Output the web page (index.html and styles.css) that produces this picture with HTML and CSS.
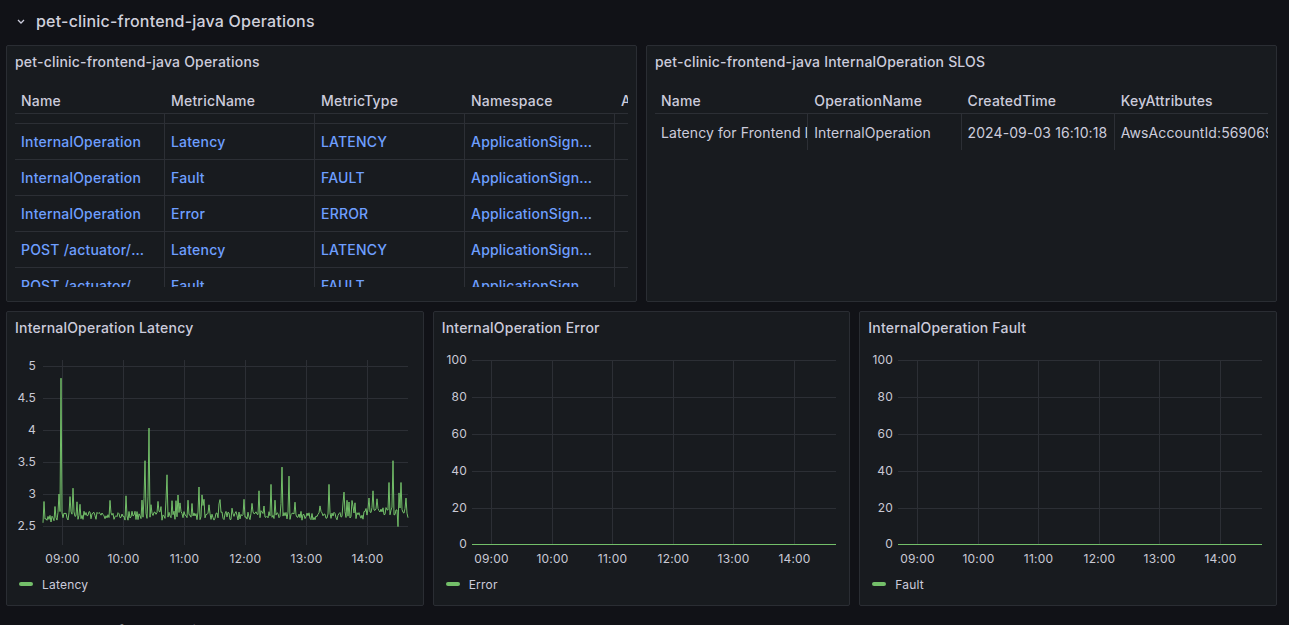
FILE: index.html
```html
<!DOCTYPE html>
<html lang="en">
<head>
  <meta charset="UTF-8" />
  <title>pet-clinic-frontend-java Operations</title>
  <link rel="stylesheet" href="styles.css">
</head>
<body>
  <div class="dashboard">
    <div class="row-title">
      <svg class="chevron" viewBox="0 0 8 5"><path d="M1 1l3 3 3-3"/></svg>
      <span>pet-clinic-frontend-java Operations</span>
    </div>

    <div class="panel-row top">
      <div class="panel">
        <div class="panel-header">pet-clinic-frontend-java Operations</div>
        <div class="table-wrap ops">
          <table>
            <thead>
              <tr>
                <th>Name</th>
                <th>MetricName</th>
                <th>MetricType</th>
                <th>Namespace</th>
                <th>AccountId</th>
              </tr>
            </thead>
            <tbody>
              <tr class="spacer"><td></td><td></td><td></td><td></td><td></td></tr>
              <tr>
                <td class="link">InternalOperation</td>
                <td class="link">Latency</td>
                <td class="link">LATENCY</td>
                <td class="link">ApplicationSignals/Service</td>
                <td></td>
              </tr>
              <tr>
                <td class="link">InternalOperation</td>
                <td class="link">Fault</td>
                <td class="link">FAULT</td>
                <td class="link">ApplicationSignals/Service</td>
                <td></td>
              </tr>
              <tr>
                <td class="link">InternalOperation</td>
                <td class="link">Error</td>
                <td class="link">ERROR</td>
                <td class="link">ApplicationSignals/Service</td>
                <td></td>
              </tr>
              <tr>
                <td class="link">POST /actuator/refresh</td>
                <td class="link">Latency</td>
                <td class="link">LATENCY</td>
                <td class="link">ApplicationSignals/Service</td>
                <td></td>
              </tr>
              <tr>
                <td class="link">POST /actuator/refresh</td>
                <td class="link">Fault</td>
                <td class="link">FAULT</td>
                <td class="link">ApplicationSignals/Service</td>
                <td></td>
              </tr>
            </tbody>
          </table>
        </div>
      </div>

      <div class="panel">
        <div class="panel-header">pet-clinic-frontend-java InternalOperation SLOS</div>
        <div class="table-wrap slos">
          <table>
            <thead>
              <tr>
                <th>Name</th>
                <th>OperationName</th>
                <th>CreatedTime</th>
                <th>KeyAttributes</th>
              </tr>
            </thead>
            <tbody>
              <tr>
                <td>Latency for Frontend InternalOperation</td>
                <td>InternalOperation</td>
                <td>2024-09-03 16:10:18</td>
                <td>AwsAccountId:569069134123,Environment:eks</td>
              </tr>
            </tbody>
          </table>
        </div>
      </div>
    </div>

    <div class="panel-row charts">
      <div class="panel">
        <div class="panel-header">InternalOperation Latency</div>
        <svg class="chart" width="416" height="225" viewBox="0 0 416 225">
          <g class="grid">
            <line x1="36" y1="22.5" x2="401" y2="22.5"/>
            <line x1="36" y1="54.5" x2="401" y2="54.5"/>
            <line x1="36" y1="86.5" x2="401" y2="86.5"/>
            <line x1="36" y1="118.5" x2="401" y2="118.5"/>
            <line x1="36" y1="150.5" x2="401" y2="150.5"/>
            <line x1="36" y1="182.5" x2="401" y2="182.5"/>
            <line x1="55.5" y1="16" x2="55.5" y2="201"/>
            <line x1="116.5" y1="16" x2="116.5" y2="201"/>
            <line x1="177.5" y1="16" x2="177.5" y2="201"/>
            <line x1="238.5" y1="16" x2="238.5" y2="201"/>
            <line x1="299.5" y1="16" x2="299.5" y2="201"/>
            <line x1="360.5" y1="16" x2="360.5" y2="201"/>
          </g>
          <g class="axis y">
            <text x="29" y="23">5</text>
            <text x="29" y="55">4.5</text>
            <text x="29" y="87">4</text>
            <text x="29" y="119">3.5</text>
            <text x="29" y="151">3</text>
            <text x="29" y="183">2.5</text>
          </g>
          <g class="axis x">
            <text x="55.5" y="216">09:00</text>
            <text x="116.5" y="216">10:00</text>
            <text x="177.5" y="216">11:00</text>
            <text x="238.5" y="216">12:00</text>
            <text x="299.5" y="216">13:00</text>
            <text x="360.5" y="216">14:00</text>
          </g>
          <polyline id="latencyLine" class="series" points=""/>
        </svg>
        <div class="legend"><span class="legend-mark"></span>Latency</div>
      </div>

      <div class="panel">
        <div class="panel-header">InternalOperation Error</div>
        <svg class="chart" width="416" height="225" viewBox="0 0 416 225">
          <g class="grid">
            <line x1="38" y1="16.5" x2="402" y2="16.5"/>
            <line x1="38" y1="53.5" x2="402" y2="53.5"/>
            <line x1="38" y1="90.5" x2="402" y2="90.5"/>
            <line x1="38" y1="127.5" x2="402" y2="127.5"/>
            <line x1="38" y1="164.5" x2="402" y2="164.5"/>
            <line x1="57.5" y1="16" x2="57.5" y2="201"/>
            <line x1="118.5" y1="16" x2="118.5" y2="201"/>
            <line x1="178.5" y1="16" x2="178.5" y2="201"/>
            <line x1="239.5" y1="16" x2="239.5" y2="201"/>
            <line x1="299.5" y1="16" x2="299.5" y2="201"/>
            <line x1="360.5" y1="16" x2="360.5" y2="201"/>
          </g>
          <g class="axis y">
            <text x="33" y="17">100</text>
            <text x="33" y="54">80</text>
            <text x="33" y="91">60</text>
            <text x="33" y="128">40</text>
            <text x="33" y="165">20</text>
            <text x="33" y="201">0</text>
          </g>
          <g class="axis x">
            <text x="57.5" y="216">09:00</text>
            <text x="118.5" y="216">10:00</text>
            <text x="178.5" y="216">11:00</text>
            <text x="239.5" y="216">12:00</text>
            <text x="299.5" y="216">13:00</text>
            <text x="360.5" y="216">14:00</text>
          </g>
          <line class="series" x1="38" y1="200.5" x2="402" y2="200.5"/>
        </svg>
        <div class="legend"><span class="legend-mark"></span>Error</div>
      </div>

      <div class="panel">
        <div class="panel-header">InternalOperation Fault</div>
        <svg class="chart" width="416" height="225" viewBox="0 0 416 225">
          <g class="grid">
            <line x1="38" y1="16.5" x2="402" y2="16.5"/>
            <line x1="38" y1="53.5" x2="402" y2="53.5"/>
            <line x1="38" y1="90.5" x2="402" y2="90.5"/>
            <line x1="38" y1="127.5" x2="402" y2="127.5"/>
            <line x1="38" y1="164.5" x2="402" y2="164.5"/>
            <line x1="57.5" y1="16" x2="57.5" y2="201"/>
            <line x1="118.5" y1="16" x2="118.5" y2="201"/>
            <line x1="178.5" y1="16" x2="178.5" y2="201"/>
            <line x1="239.5" y1="16" x2="239.5" y2="201"/>
            <line x1="299.5" y1="16" x2="299.5" y2="201"/>
            <line x1="360.5" y1="16" x2="360.5" y2="201"/>
          </g>
          <g class="axis y">
            <text x="33" y="17">100</text>
            <text x="33" y="54">80</text>
            <text x="33" y="91">60</text>
            <text x="33" y="128">40</text>
            <text x="33" y="165">20</text>
            <text x="33" y="201">0</text>
          </g>
          <g class="axis x">
            <text x="57.5" y="216">09:00</text>
            <text x="118.5" y="216">10:00</text>
            <text x="178.5" y="216">11:00</text>
            <text x="239.5" y="216">12:00</text>
            <text x="299.5" y="216">13:00</text>
            <text x="360.5" y="216">14:00</text>
          </g>
          <line class="series" x1="38" y1="200.5" x2="402" y2="200.5"/>
        </svg>
        <div class="legend"><span class="legend-mark"></span>Fault</div>
      </div>
    </div>

    <div class="row-title next">
      <svg class="chevron" viewBox="0 0 8 5"><path d="M1 1l3 3 3-3"/></svg>
      <span>pet-clinic-frontend-java Dependencies metrics</span>
    </div>
  </div>

  <script>
    // latency series, one point per minute (about 1px)
    let seed = 11;
    function rand() {
      seed = (seed * 16807) % 2147483647;
      return (seed - 1) / 2147483646;
    }

    const spikes = {
      52: 3.0, 54: 4.81, 66: 3.09, 138: 3.52, 142: 4.03, 160: 3.3, 192: 3.11,
      252: 3.05, 264: 3.15, 275: 3.42, 282: 3.28, 322: 3.15, 337: 3.03,
      366: 3.05, 382: 3.18, 386: 3.52, 391: 2.49, 394: 3.18
    };

    const points = [];
    for (let x = 36; x <= 401; x++) {
      let base = 2.66;
      if (x < 50) base = 2.62;
      if (x >= 358 && x <= 398) base = 2.74;
      let v = base + (rand() - 0.5) * 0.14;
      if (rand() < 0.14) v += 0.1 + rand() * 0.22;
      if (spikes[x] !== undefined) v = spikes[x];
      if (x === 401) v = 2.63;
      const y = 182 - (v - 2.5) * 64;
      points.push(x + "," + y.toFixed(1));
    }
    document.getElementById("latencyLine").setAttribute("points", points.join(" "));
  </script>
</body>
</html>
```

FILE: styles.css
```css
body {
  margin: 0;
  background: #111217;
  color: #ccccdc;
  font-family: Inter, "Noto Sans", sans-serif;
  font-size: 14px;
  letter-spacing: 0.2px;
  overflow: hidden;
}

.dashboard {
  padding: 0 12px 0 6px;
}

.row-title {
  display: flex;
  align-items: center;
  height: 45px;
  padding-bottom: 3px;
  box-sizing: border-box;
  font-size: 16px;
  font-weight: 500;
  color: #d0d0dc;
}

.row-title.next {
  margin-top: 4px;
}

.chevron {
  width: 8px;
  height: 5px;
  margin: 0 11px 0 11px;
  fill: none;
  stroke: #ccccdc;
  stroke-width: 1.3;
}

.panel-row {
  display: flex;
  gap: 9px;
}

.panel-row + .panel-row {
  margin-top: 9px;
}

.panel {
  flex: 1;
  min-width: 0;
  background: #181b1f;
  border: 1px solid #2a2d33;
  border-radius: 2px;
  box-sizing: border-box;
  overflow: hidden;
}

.top .panel {
  height: 257px;
}

.charts .panel {
  height: 295px;
}

.panel-header {
  height: 32px;
  line-height: 32px;
  padding: 0 8px;
  font-weight: 500;
  white-space: nowrap;
}

/* tables */

.table-wrap {
  margin: 6px 8px 0;
  height: 203px;
  overflow: hidden;
}

table {
  border-collapse: separate;
  border-spacing: 0;
  table-layout: fixed;
}

.ops table {
  width: 750px;
}

.slos table {
  width: 100%;
}

th {
  height: 30px;
  box-sizing: border-box;
  padding: 3px 6px 0;
  text-align: left;
  font-weight: 500;
  border-bottom: 1px solid #2c2f35;
  white-space: nowrap;
  overflow: hidden;
}

td {
  height: 36px;
  box-sizing: border-box;
  padding: 0 6px;
  border-right: 1px solid #2c2f35;
  border-bottom: 1px solid #2c2f35;
  white-space: nowrap;
  overflow: hidden;
  text-overflow: ellipsis;
}

.ops td {
  padding-right: 16px;
}

.spacer td {
  height: 10px;
}

.link {
  color: #6e9fff;
  font-weight: 500;
}

.slos td {
  border-bottom: none;
  text-overflow: clip;
  letter-spacing: 0.1px;
}

.slos td:last-child {
  border-right: none;
}

/* charts */

.chart {
  display: block;
}

.grid line {
  stroke: #2c2f35;
  stroke-width: 1;
}

.axis text {
  fill: #c9c9d5;
  font-size: 12px;
  dominant-baseline: middle;
}

.axis.y text {
  text-anchor: end;
}

.axis.x text {
  text-anchor: middle;
}

.series {
  fill: none;
  stroke: #73bf69;
  stroke-width: 1;
}

.legend {
  display: flex;
  align-items: center;
  gap: 9px;
  height: 20px;
  margin-top: 5px;
  padding-left: 12px;
  font-size: 12px;
}

.legend-mark {
  width: 14px;
  height: 4px;
  border-radius: 2px;
  background: #73bf69;
}
```
